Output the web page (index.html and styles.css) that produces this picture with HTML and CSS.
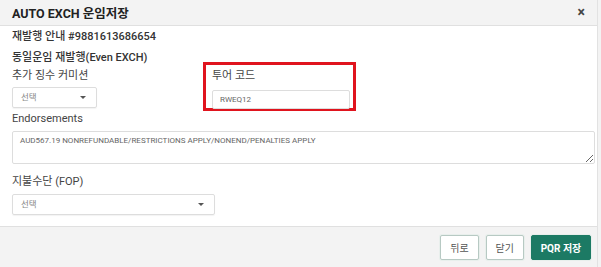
FILE: index.html
```html
<!DOCTYPE html>
<html lang="ko">

<head>
  <meta charset="UTF-8">
  <title>AUTO EXCH 운임저장</title>
  <link rel="stylesheet" href="styles.css">
</head>

<body>

  <div class="modal">
    <div class="modal-header">
      <h3>AUTO EXCH 운임저장</h3>
      <span class="close">&times;</span>
    </div>

    <div class="modal-body">
      <div class="info">재발행 안내 #9881613686654</div>
      <div class="info">동일운임 재발행(Even EXCH)</div>

      <div class="row">
        <div class="field commission">
          <label>추가 징수 커미션</label>
          <div class="select small">선택<span class="caret"></span></div>
        </div>

        <div class="field tour highlight">
          <label for="tourCode">투어 코드</label>
          <input type="text" id="tourCode" value="RWEQ12">
        </div>
      </div>

      <div class="field endorse">
        <label for="endorse">Endorsements</label>
        <textarea id="endorse" rows="2">AUD567.19 NONREFUNDABLE/RESTRICTIONS APPLY/NONEND/PENALTIES APPLY</textarea>
      </div>

      <div class="field">
        <label>지불수단 (FOP)</label>
        <div class="select wide">선택<span class="caret"></span></div>
      </div>
    </div>

    <div class="modal-footer">
      <button class="btn">뒤로</button>
      <button class="btn">닫기</button>
      <button class="btn primary">PQR 저장</button>
    </div>
  </div>

</body>

</html>
```

FILE: styles.css
```css
* {
  box-sizing: border-box;
}

body {
  margin: 0;
  font-family: Roboto, "Noto Sans CJK KR", sans-serif;
  color: #333;
  background: #f3f3f3;
}

.modal {
  width: 598px;
  height: 267px;
  background: white;
  border-right: 1px solid #e2e2e2;
  display: flex;
  flex-direction: column;
}

.modal-header {
  height: 26px;
  background: #f3f3f3;
  border-bottom: 1px solid #e0e0e0;
  display: flex;
  align-items: center;
  justify-content: space-between;
  padding: 0 12px 1px 12px;
}

.modal-header h3 {
  margin: 0;
  font-size: 12.5px;
  font-weight: bold;
  color: #222;
}

.close {
  font-size: 14px;
  font-weight: bold;
  color: #444;
  line-height: 1;
}

.modal-body {
  flex: 1;
  padding: 0 4px 0 12px;
}

.info {
  font-size: 11px;
  font-weight: 500;
  color: #333;
  line-height: 21px;
}

.row {
  display: flex;
  align-items: flex-start;
}

.field label {
  display: block;
  font-size: 11px;
  color: #444;
  line-height: 14px;
  margin-bottom: 5px;
}

.commission {
  width: 191px;
  padding-top: 1px;
}

.commission label {
  margin-bottom: 4px;
}

.highlight {
  border: 3px solid #e0141e;
  width: 153px;
  height: 49px;
  margin-top: -6px;
  padding: 4px 6px 0 6px;
}

.select {
  position: relative;
  height: 21px;
  border: 1px solid #ddd;
  border-radius: 2px;
  font-size: 8.5px;
  color: #888;
  line-height: 19px;
  padding-left: 8px;
  box-shadow: 0 1px 1px rgba(0, 0, 0, 0.05);
}

.select.small {
  width: 85px;
}

.select.wide {
  width: 203px;
}

.caret {
  position: absolute;
  right: 10px;
  top: 8px;
  border-left: 3px solid transparent;
  border-right: 3px solid transparent;
  border-top: 3px solid #555;
}

input,
textarea {
  font-family: Roboto, "Noto Sans CJK KR", sans-serif;
  border: 1px solid #ddd;
  border-radius: 2px;
  color: #666;
  font-size: 8px;
  padding: 4px 7px;
}

input {
  width: 138px;
  height: 19px;
}

.endorse {
  margin-top: 1px;
}

.endorse textarea {
  display: block;
  width: 583px;
  height: 33px;
  resize: vertical;
  margin-bottom: 11px;
}

.tour label {
  margin-bottom: 4px;
}

.modal-footer {
  height: 41px;
  background: #f3f3f3;
  border-top: 1px solid #e0e0e0;
  display: flex;
  justify-content: flex-end;
  align-items: center;
  gap: 7px;
  padding-right: 6px;
}

.btn {
  font-family: Roboto, "Noto Sans CJK KR", sans-serif;
  height: 25px;
  min-width: 36px;
  padding: 0 9px;
  font-size: 10px;
  color: #555;
  background: white;
  border: 1px solid #b7c9c3;
  border-radius: 2px;
  box-shadow: 0 0 0 1px #e8efec;
}

.btn.primary {
  width: 60px;
  background: #1c7a64;
  border-color: #1c7a64;
  color: white;
  font-weight: bold;
  padding: 0;
}
```
